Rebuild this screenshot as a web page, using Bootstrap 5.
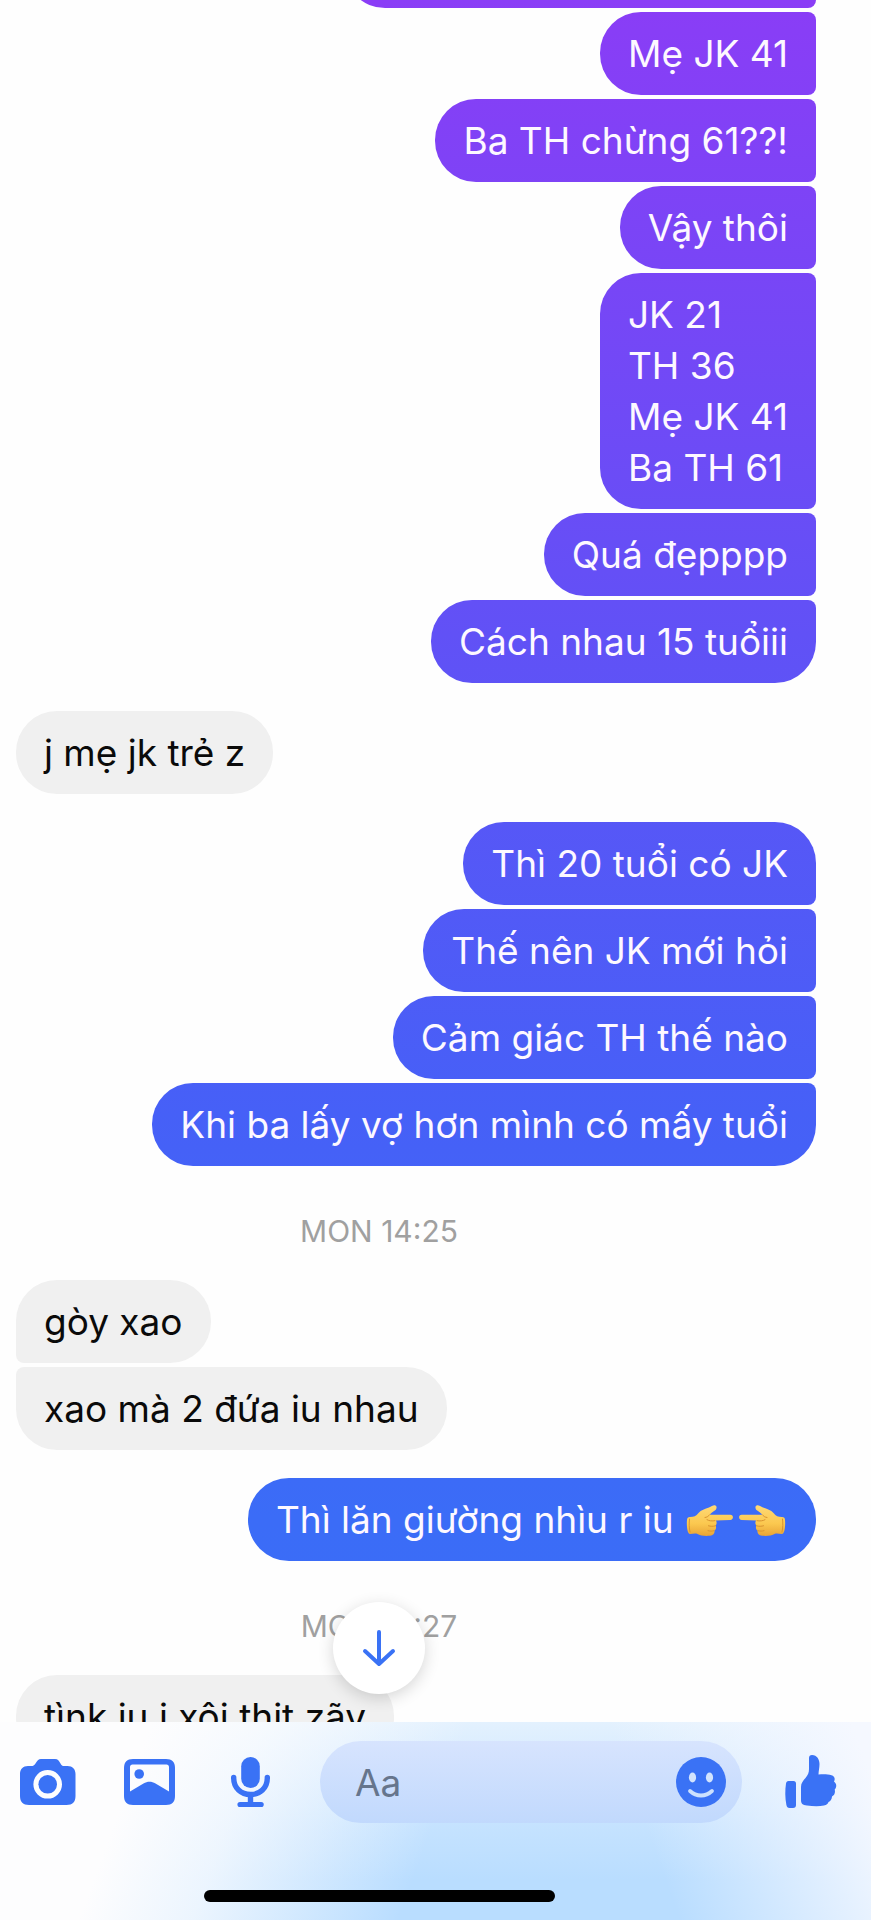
<!DOCTYPE html>
<html lang="vi">
<head>
<meta charset="utf-8">
<meta name="viewport" content="width=device-width, initial-scale=1">
<title>Chat</title>
<link href="https://cdn.jsdelivr.net/npm/bootstrap@5.3.0/dist/css/bootstrap.min.css" rel="stylesheet">
<style>
body { font-family: Inter, "Liberation Sans", sans-serif; background: #fefefe; color: #0a0a0a; }
.thread { min-height: 0; padding: 0 55px 0 16px; }
/* the conversation is scrolled: its first message is mostly above the window */
.scrolled { margin-top: -75px; }
.run { gap: 4px; margin-bottom: 28px; }
.run.last-before-time { margin-bottom: 0; }
.msg { font-size: 37px; line-height: 51px; padding: 16px 28px; border-radius: 41px; }
.msg-in { background: #f0f0f0; }
.msg-out { color: #fdf8ff; background: linear-gradient(#8a3df6 0%, #6151f6 33%, #4660f7 58%, #3b6cf7 79%, #3a6ef7 100%) fixed; }
.run-out .msg:not(:last-child) { border-bottom-right-radius: 8px; }
.run-out .msg:not(:first-child) { border-top-right-radius: 8px; }
.run-in .msg:not(:last-child) { border-bottom-left-radius: 8px; }
.run-in .msg:not(:first-child) { border-top-left-radius: 8px; }
.clipped-msg { min-width: 59%; }
.stamp { font-size: 30px; line-height: 34px; color: #a0a0a0; padding: 48px 74px 32px 0; }
.hand { width: 52px; height: 40px; vertical-align: -8px; }
.to-bottom { left: 333px; top: -120px; width: 92px; height: 92px; background: #fff; box-shadow: 0 4px 16px rgba(0,0,0,.16); color: #3a72f5; }
.composer {
  background:
    linear-gradient(110deg, #fdfdfe 16%, rgba(253,253,254,.75) 28%, rgba(253,253,254,0) 50%),
    linear-gradient(70deg, rgba(247,250,255,0) 72%, #f5f8ff 98%),
    linear-gradient(#e3f1fe 0%, #c6e3ff 50%, #b9ddff 80%);
  padding: 19px 34px 18px 20px; color: #3a72f5;
}
.tools { gap: 45px; margin-right: 42px; }
.tool { width: 56px; height: 56px; color: #3a72f5; }
.field { height: 82px; border-radius: 41px; background: linear-gradient(#d7e4fe, #c1d9fd); margin-right: 43px; padding: 0 16px 0 35px; }
.field input { font-size: 37px; line-height: 51px; color: #66758c; min-width: 0; }
.field input::placeholder { color: #66758c; opacity: 1; }
.smile { width: 50px; height: 50px; color: #3a72f5; }
.thumb { width: 52px; height: 56px; color: #3a72f5; }
.home-bar { width: 351px; height: 12px; border-radius: 6px; background: #000; margin: 67px 0 0 184px; }
</style>
</head>
<body>
<div class="d-flex flex-column vh-100 overflow-hidden">
  <main class="thread flex-fill overflow-hidden">
    <div class="scrolled d-flex flex-column">
      <div class="run run-out d-flex flex-column align-items-end">
        <div class="msg msg-out clipped-msg">&nbsp;</div>
        <div class="msg msg-out">Mẹ JK 41</div>
        <div class="msg msg-out">Ba TH chừng 61??!</div>
        <div class="msg msg-out">Vậy thôi</div>
        <div class="msg msg-out">JK 21<br>TH 36<br>Mẹ JK 41<br>Ba TH 61</div>
        <div class="msg msg-out">Quá đẹpppp</div>
        <div class="msg msg-out">Cách nhau 15 tuổiii</div>
      </div>
      <div class="run run-in d-flex flex-column align-items-start">
        <div class="msg msg-in">j mẹ jk trẻ z</div>
      </div>
      <div class="run run-out last-before-time d-flex flex-column align-items-end">
        <div class="msg msg-out">Thì 20 tuổi có JK</div>
        <div class="msg msg-out">Thế nên JK mới hỏi</div>
        <div class="msg msg-out">Cảm giác TH thế nào</div>
        <div class="msg msg-out">Khi ba lấy vợ hơn mình có mấy tuổi</div>
      </div>
      <div class="stamp text-center">MON 14:25</div>
      <div class="run run-in d-flex flex-column align-items-start">
        <div class="msg msg-in">gòy xao</div>
        <div class="msg msg-in">xao mà 2 đứa iu nhau</div>
      </div>
      <div class="run run-out last-before-time d-flex flex-column align-items-end">
        <div class="msg msg-out text-nowrap">Thì lăn giường nhìu r iu <svg class="hand" viewBox="0 0 52 40" role="img" aria-label="👉"><use href="#hand"/></svg><svg class="hand" viewBox="0 0 52 40" role="img" aria-label="👈"><g transform="translate(52 0) scale(-1 1)"><use href="#hand"/></g></svg></div>
      </div>
      <div class="stamp text-center">MON 14:27</div>
      <div class="run run-in d-flex flex-column align-items-start">
        <div class="msg msg-in">tìnk iu j xôi thịt zãy</div>
      </div>
    </div>
  </main>

  <footer class="composer position-relative flex-shrink-0">
    <button type="button" class="to-bottom btn rounded-circle border-0 p-0 position-absolute d-flex align-items-center justify-content-center" aria-label="Scroll to bottom">
      <svg width="34" height="38" viewBox="0 0 34 38" fill="none" stroke="currentColor" stroke-width="4" stroke-linecap="round" stroke-linejoin="round"><path d="M17 3v32M3 22l14 13 14-13"/></svg>
    </button>
    <form class="d-flex align-items-center">
      <div class="tools d-flex">
        <button type="button" class="tool btn border-0 p-0 d-flex align-items-center justify-content-center" aria-label="Camera">
          <svg width="56" height="46" viewBox="0 0 56 46"><path fill="currentColor" fill-rule="evenodd" d="M21 0h14c3 0 4 2 5.500 4.500C41.500 6.500 42.500 7 44 7h3.500c5 0 8 3 8 8v22c0 6-3 9-9 9H9c-6 0-9-3-9-9V15c0-5 3-8 8-8h3.500c1.500 0 2.700-.5 4-2.500C17 2 18.500 0 21 0zM27.700 11a14.300 14.300 0 1 0 0 28.600 14.300 14.300 0 0 0 0-28.600z"/><circle cx="27.700" cy="25.300" r="9.300" fill="currentColor"/></svg>
        </button>
        <button type="button" class="tool btn border-0 p-0 d-flex align-items-center justify-content-center" aria-label="Photos">
          <svg width="51" height="46" viewBox="0 0 51 46"><path fill="currentColor" fill-rule="evenodd" d="M9 0h33c6 0 9 3 9 9v28c0 6-3 9-9 9H9c-6 0-9-3-9-9V9c0-6 3-9 9-9zM8.500 5.500C7 5.500 6 6.500 6 8v24.500l13.500-8c4-2.300 8-2.300 12 0L45 32.500V8c0-1.500-1-2.500-2.500-2.500z"/><circle cx="15.200" cy="15" r="4.800" fill="currentColor"/></svg>
        </button>
        <button type="button" class="tool btn border-0 p-0 d-flex align-items-center justify-content-center" aria-label="Voice message">
          <svg width="39" height="50" viewBox="0 0 39 50"><rect x="10.200" y="0" width="18.600" height="31" rx="9.300" fill="currentColor"/><path d="M2.700 20.500v.5c0 10 7.300 16.500 16.800 16.500S36.300 31 36.300 21v-.5" fill="none" stroke="currentColor" stroke-width="5.400" stroke-linecap="round"/><path d="M16.800 38h5.400v7h8a2.600 2.600 0 0 1 0 5.200H9a2.600 2.600 0 0 1 0-5.200h7.800z" fill="currentColor"/></svg>
        </button>
      </div>
      <div class="field d-flex align-items-center flex-fill">
        <label class="visually-hidden" for="message">Message</label>
        <input id="message" type="text" class="flex-fill border-0 bg-transparent p-0 w-100" placeholder="Aa">
        <button type="button" class="smile btn border-0 p-0 d-flex flex-shrink-0" aria-label="Emoji">
          <svg width="50" height="50" viewBox="0 0 50 50"><circle cx="25" cy="25" r="25" fill="currentColor"/><g fill="#d2e3fd"><ellipse cx="16.500" cy="20.500" rx="3.600" ry="4.900"/><ellipse cx="33.500" cy="20.500" rx="3.600" ry="4.900"/></g><path d="M14 34c6.500 6 15.500 6 22 0" fill="none" stroke="#cbe0fe" stroke-width="3.800" stroke-linecap="round"/></svg>
        </button>
      </div>
      <button type="button" class="thumb btn border-0 p-0 d-flex align-items-center" aria-label="Like">
        <svg width="52" height="54" viewBox="0 0 52 54" fill="currentColor"><path d="M3.500 26h5c1.700 0 2.500 1 2.500 2.500V50c0 2-1 3-3 3H4.500C2.700 53 1.800 52 1.400 50 0 43 0 35 1 28.500 1.300 27 2 26 3.500 26z"/><path d="M16 32c0-4 2-6 4.500-9C23 20 24 17.500 24 14V3c0-2 1-3 3-3 5 0 7.500 4.500 7.500 9 0 4-1 7-1 10.500 5-.7 9.500-.3 13 .7 3 .9 4 3.500 2.500 6.300 2.700 2 3 5.500.7 8 .8 3-.2 5.500-2.700 7-.2 3-1.500 4.500-3.500 5.500-.5 2-2 3-4.500 3.500-5 1-11 .8-17 0C17.500 50 16 48.500 16 45z"/></svg>
      </button>
    </form>
    <div class="home-bar"></div>
  </footer>
</div>

<svg width="0" height="0" class="position-absolute" aria-hidden="true">
  <defs>
    <linearGradient id="skin" x1="0" y1="0" x2="0" y2="1"><stop offset="0" stop-color="#ffd976"/><stop offset=".6" stop-color="#fbc84f"/><stop offset="1" stop-color="#e8a336"/></linearGradient>
    <g id="hand">
      <path fill="url(#skin)" d="M3 19c0-2 1-3 3-3 4 0 6-1 8.500-4C17 9 21 8 25 6.500c2.500-1 4.500-2.700 6.300-2 2 .8 1.500 3.500-.5 5-2 1.400-3.800 2.300-5 4.200h20.500c3.500 0 3.500 5 0 5.200L32 19.500c1 2 .8 3.500-.3 5 .8 2 .3 4-1.200 5 .3 3-1 5-4.500 5.300-4.500.4-9.500.2-13-2-2-.8-4.500.2-7 .2-3 0-3.500-10-3-14z"/>
      <path fill="none" stroke="#d9932f" stroke-width="1" stroke-linecap="round" d="M31 19.700c-3 .5-6 .3-8-1M31.500 24.800c-2.500.8-5 .6-7 0M30 29.700c-2 .6-4 .5-6 0M25.500 13.800c-1 1.500-2.500 2.500-4.500 2.700M5.500 18c-.5 4-.5 9 .5 13"/>
    </g>
  </defs>
</svg>
<script src="https://cdn.jsdelivr.net/npm/bootstrap@5.3.0/dist/js/bootstrap.bundle.min.js"></script>
</body>
</html>
